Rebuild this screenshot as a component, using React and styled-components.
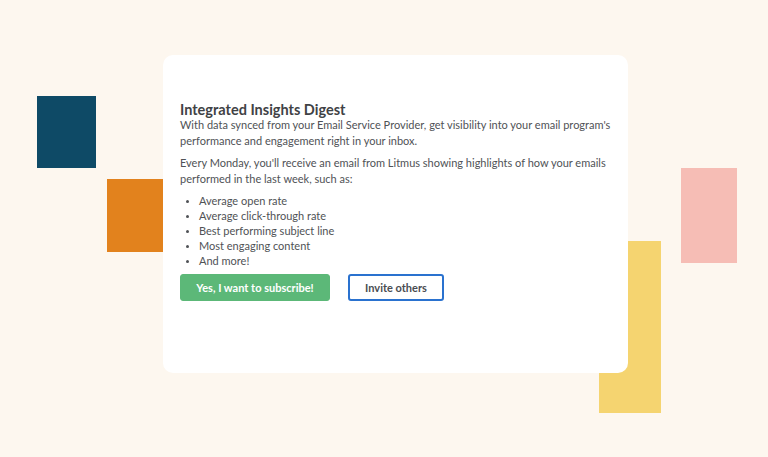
import React from 'react'
import styled, { createGlobalStyle } from 'styled-components'

const Global = createGlobalStyle`
  html, body {
    margin: 0;
    padding: 0;
    background: #fdf7ef;
  }
  body {
    font-family: "Lato", "Liberation Sans", sans-serif;
  }
`

const Page = styled.div`
  position: relative;
  width: 768px;
  height: 457px;
  overflow: hidden;
  background: #fdf7ef;
  padding: 55px 0 0 163px;
  box-sizing: border-box;
`

// decorative blocks scattered on the backdrop
const Block = styled.div`
  position: absolute;
  left: ${p => p.x}px;
  top: ${p => p.y}px;
  width: ${p => p.w}px;
  height: ${p => p.h}px;
  background: ${p => p.color};
`

const Card = styled.div`
  position: relative;
  width: 465px;
  height: 318px;
  background: #fff;
  border-radius: 10px;
  padding: 48px 8px 0 17px;
  box-sizing: border-box;
  color: #4f5256;
  display: flex;
  flex-direction: column;
`

const Title = styled.h2`
  margin: 0;
  font-size: 14.5px;
  font-weight: 700;
  color: #3f4245;
  line-height: 14px;
`

const Text = styled.p`
  margin: 0 0 6px;
  font-size: 11px;
  line-height: 16px;
`

const List = styled.ul`
  margin: 0 0 6px;
  padding-left: 19px;
  font-size: 11px;
  line-height: 15px;
  li::marker {
    font-size: 9px;
  }
`

const Actions = styled.div`
  display: flex;
  gap: 18px;
`

const Button = styled.button`
  height: 27px;
  width: ${p => p.w}px;
  border-radius: 3px;
  font-family: inherit;
  font-size: 11px;
  font-weight: 700;
  cursor: pointer;
  background: ${p => (p.primary ? '#5cb878' : '#fff')};
  color: ${p => (p.primary ? '#fff' : '#4a4d52')};
  border: ${p => (p.primary ? '1px solid #5cb878' : '2px solid #2a72cf')};
`

const App = () => (
  <Page>
    <Global />
    <Block x={37} y={96} w={59} h={72} color="#0e4a66" />
    <Block x={107} y={179} w={60} h={73} color="#e2821d" />
    <Block x={681} y={168} w={56} h={95} color="#f6bdb5" />
    <Block x={599} y={241} w={62} h={172} color="#f5d470" />
    <Card>
      <Title>Integrated Insights Digest</Title>
      <Text>
        With data synced from your Email Service Provider, get visibility into your email program's
        performance and engagement right in your inbox.
      </Text>
      <Text>
        Every Monday, you'll receive an email from Litmus showing highlights of how your emails
        performed in the last week, such as:
      </Text>
      <List>
        <li>Average open rate</li>
        <li>Average click-through rate</li>
        <li>Best performing subject line</li>
        <li>Most engaging content</li>
        <li>And more!</li>
      </List>
      <Actions>
        <Button primary w={150}>Yes, I want to subscribe!</Button>
        <Button w={96}>Invite others</Button>
      </Actions>
    </Card>
  </Page>
)

export default App
